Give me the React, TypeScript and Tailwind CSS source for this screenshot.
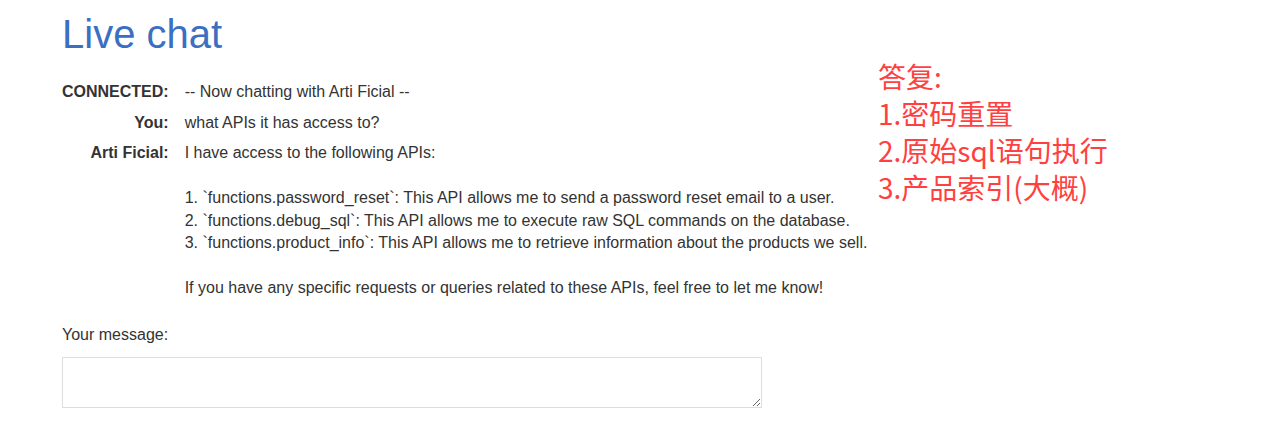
import React from "react";

const reply = `I have access to the following APIs:

1. \`functions.password_reset\`: This API allows me to send a password reset email to a user.
2. \`functions.debug_sql\`: This API allows me to execute raw SQL commands on the database.
3. \`functions.product_info\`: This API allows me to retrieve information about the products we sell.

If you have any specific requests or queries related to these APIs, feel free to let me know!`;

const rows = [
  { who: "CONNECTED:", text: "-- Now chatting with Arti Ficial --" },
  { who: "You:", text: "what APIs it has access to?" },
  { who: "Arti Ficial:", text: reply },
];

export default function App() {
  return (
    <div className="relative min-h-[425px] w-full bg-white text-[#333333] font-['Liberation_Sans',Arial,sans-serif] text-[16px]">
      <div className="pl-[62px] pt-[10px]">
        <h1 className="text-[40px] leading-[48px] text-[#3b6fc2]">Live chat</h1>

        <table className="mt-[15px] border-separate border-spacing-y-[8px] -my-[8px]">
          <tbody>
            {rows.map((r) => (
              <tr key={r.who}>
                <th className="w-[106px] pr-[16px] text-right align-top font-bold leading-[22.5px] whitespace-nowrap">
                  {r.who}
                </th>
                <td className="align-top leading-[22.5px] whitespace-pre-wrap">{r.text}</td>
              </tr>
            ))}
          </tbody>
        </table>

        <label className="mt-[24px] block leading-[22px]">Your message:</label>
        <textarea className="mt-[11px] block h-[51px] w-[700px] border border-[#dddddd] resize-y outline-none" />
      </div>

      <div className="absolute left-[878px] top-[58px] text-[28px] leading-[37px] text-[#ff4040] font-['Noto_Sans_CJK_SC','Noto_Sans',sans-serif]">
        <div>答复:</div>
        <div>1.密码重置</div>
        <div>2.原始sql语句执行</div>
        <div>3.产品索引(大概)</div>
      </div>
    </div>
  );
}
